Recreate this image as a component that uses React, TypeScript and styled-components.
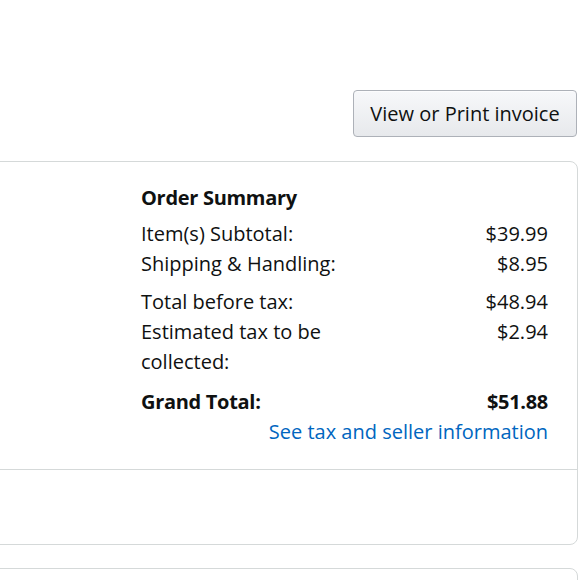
import styled, { createGlobalStyle } from "styled-components";

const ink = "#0f1111";
const line = "#d5d9d9";
const link = "#0066c0";

const GlobalStyle = createGlobalStyle`
  html, body {
    margin: 0;
    padding: 0;
    background: #ffffff;
    overflow: hidden;
  }
  body {
    font-family: "Open Sans", "Noto Sans", Arial, sans-serif;
    color: ${ink};
  }
`;

const Page = styled.div`
  width: 580px;
  height: 580px;
  padding: 90px 2px 0 0;
  box-sizing: border-box;
  overflow: hidden;
`;

const ButtonRow = styled.div`
  display: flex;
  justify-content: flex-end;
  padding-right: 1px;
`;

const InvoiceButton = styled.button`
  width: 224px;
  height: 47px;
  padding: 0;
  font-family: inherit;
  font-size: 20px;
  color: ${ink};
  background: linear-gradient(to bottom, #f7f8fa, #e7e9ec);
  border: 1px solid #adb1b8;
  border-radius: 4px;
  box-shadow: 0 1px 0 rgba(255, 255, 255, 0.6) inset;
  cursor: pointer;
`;

const Card = styled.div`
  margin: 24px 0 0 -20px;
  border: 1px solid ${line};
  border-radius: 8px;
`;

const NextCard = styled(Card)`
  margin-top: 23px;
  height: 40px;
`;

const CardTop = styled.div`
  display: flex;
  justify-content: flex-end;
  padding: 21px 29px 22px 0;
  border-bottom: 1px solid ${line};
`;

const CardBottom = styled.div`
  height: 74px;
`;

const Summary = styled.div`
  width: 407px;
  font-size: 20px;
  line-height: 30px;
`;

const Heading = styled.div`
  font-weight: 700;
  letter-spacing: -0.3px;
  margin-bottom: 6px;
`;

const Group = styled.div<{ gap: number }>`
  margin-top: ${(p) => p.gap}px;
`;

const Row = styled.div<{ bold?: boolean }>`
  display: flex;
  justify-content: space-between;
  align-items: flex-start;
  font-weight: ${(p) => (p.bold ? 700 : 400)};
  letter-spacing: ${(p) => (p.bold ? "-0.3px" : "0")};
`;

const Label = styled.span`
  max-width: 200px;
`;

const Amount = styled.span`
  text-align: right;
`;

const LinkRow = styled.div`
  text-align: right;
`;

const SellerLink = styled.a`
  color: ${link};
  text-decoration: none;
`;

export default function App() {
  return (
    <>
      <GlobalStyle />
      <Page>
        <ButtonRow>
          <InvoiceButton>View or Print invoice</InvoiceButton>
        </ButtonRow>
        <Card>
          <CardTop>
            <Summary>
              <Heading>Order Summary</Heading>
              <Row>
                <Label>Item(s) Subtotal:</Label>
                <Amount>$39.99</Amount>
              </Row>
              <Row>
                <Label>Shipping &amp; Handling:</Label>
                <Amount>$8.95</Amount>
              </Row>
              <Group gap={8}>
                <Row>
                  <Label>Total before tax:</Label>
                  <Amount>$48.94</Amount>
                </Row>
                <Row>
                  <Label>Estimated tax to be collected:</Label>
                  <Amount>$2.94</Amount>
                </Row>
              </Group>
              <Group gap={10}>
                <Row bold>
                  <Label>Grand Total:</Label>
                  <Amount>$51.88</Amount>
                </Row>
                <LinkRow>
                  <SellerLink href="#">See tax and seller information</SellerLink>
                </LinkRow>
              </Group>
            </Summary>
          </CardTop>
          <CardBottom />
        </Card>
        <NextCard />
      </Page>
    </>
  );
}
